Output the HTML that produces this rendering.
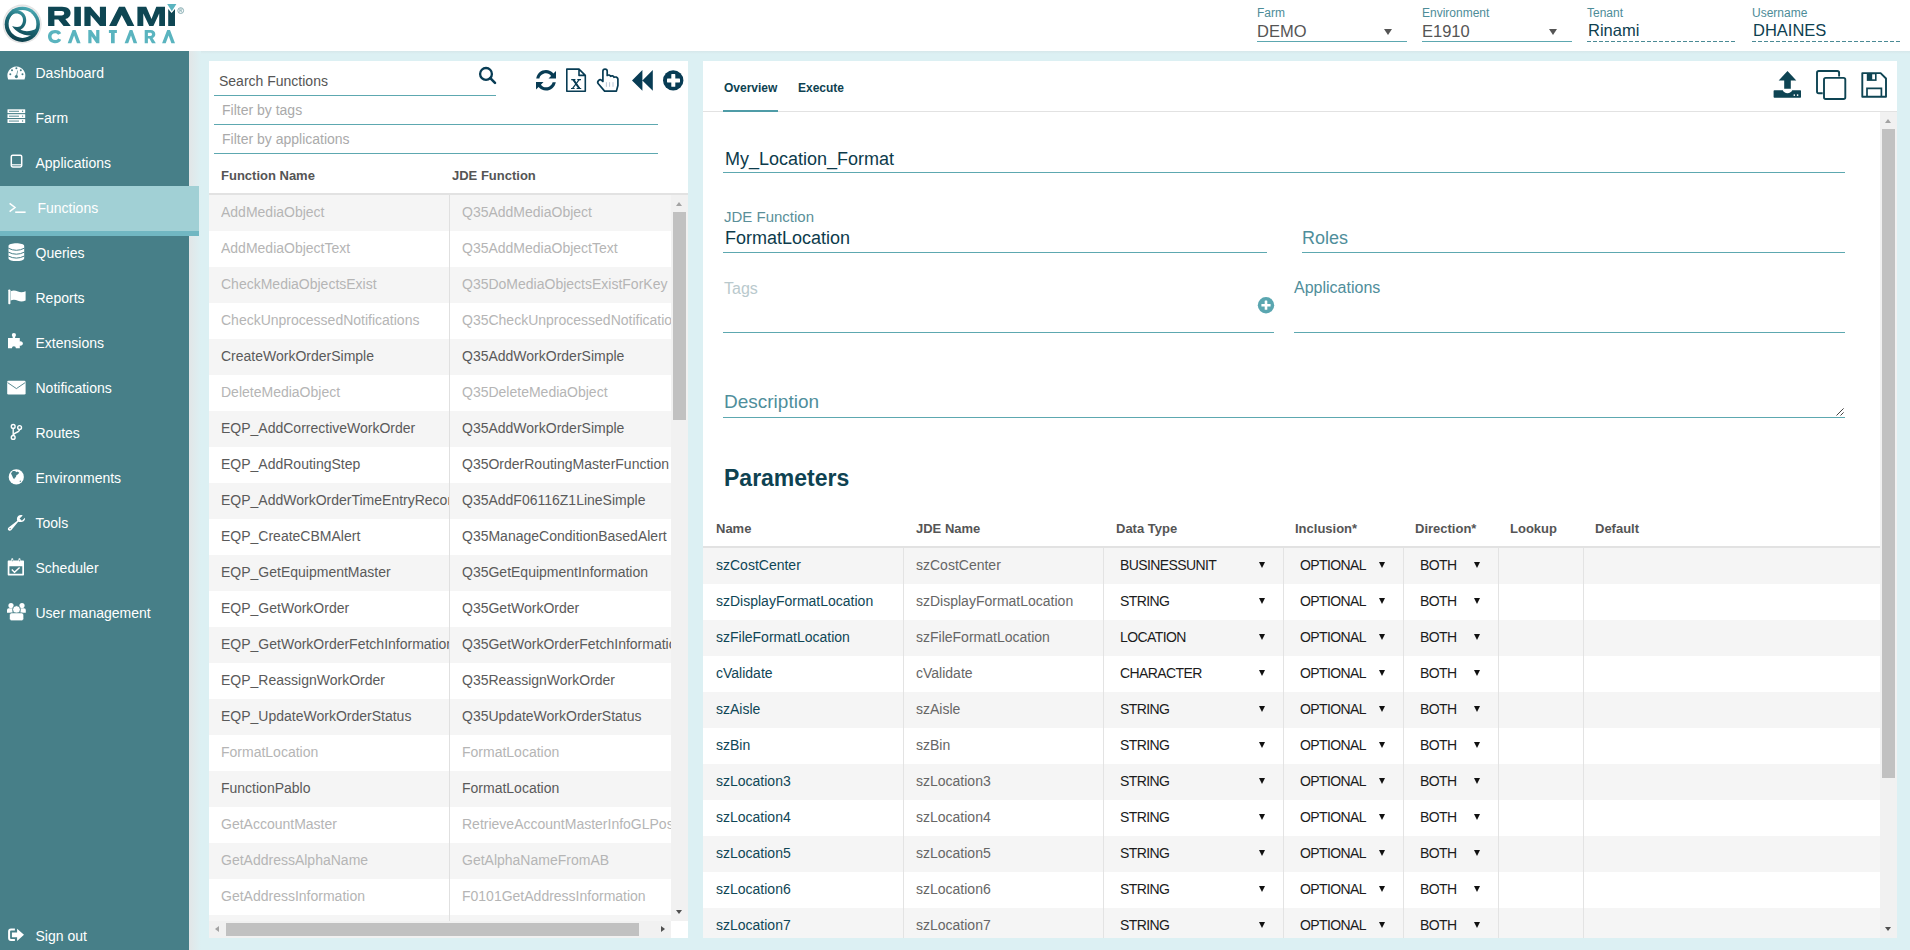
<!DOCTYPE html>
<html><head><meta charset="utf-8"><style>
*{box-sizing:border-box;margin:0;padding:0}
html,body{width:1910px;height:950px;overflow:hidden;background:#dcf0f3;font-family:"Liberation Sans",sans-serif}
.a{position:absolute;white-space:nowrap}
#hdr{position:absolute;left:0;top:0;width:1910px;height:51px;background:#fff}
#side{position:absolute;left:0;top:51px;width:189px;height:899px;background:#477f88}
#sideshadow{position:absolute;left:189px;top:51px;width:12px;height:899px;background:linear-gradient(to right,#e2e6e7,#dcf0f3)}
#topshadow{position:absolute;left:189px;top:51px;width:1721px;height:3px;background:linear-gradient(to bottom,#d6e7ea,#dcf0f3)}
.nav{position:absolute;left:36px;font-size:14px;line-height:16px;color:#fff;white-space:nowrap}
.nic{position:absolute}
#act{position:absolute;left:0;top:186px;width:199px;height:50px;background:#a1d0d5;border-bottom:5px solid #71b7c2}
.card{position:absolute;background:#fff}
.hl{position:absolute;font-size:12px;line-height:14px;color:#4d8c98;white-space:nowrap}
.hv{position:absolute;font-size:16.5px;line-height:18px;color:#555;white-space:nowrap}
.ul{position:absolute;height:1px;background:#5ca7b0}
.row{position:absolute;left:209px;width:462px;height:36px}
.c1{position:absolute;left:12px;top:9px;font-size:14px;line-height:16px;width:228px;overflow:hidden;white-space:nowrap}
.c2{position:absolute;left:253px;top:9px;font-size:14px;line-height:16px;width:209px;overflow:hidden;white-space:nowrap}
.lt{color:#b5b5b5}
.dk{color:#5a5a5a}
.pr{position:absolute;left:703px;width:1177px;height:36px}
.pc{position:absolute;top:9px;font-size:14px;line-height:16px;white-space:nowrap}
.sel{color:#1c1c1c;letter-spacing:-0.6px}
.vl{position:absolute;top:0;width:1px;height:36px;background:#e3e3e3}
.arr{position:absolute;top:14px;width:0;height:0;border-left:3.5px solid transparent;border-right:3.5px solid transparent;border-top:6px solid #111}
.th{position:absolute;font-size:13px;line-height:15px;font-weight:bold;color:#555;white-space:nowrap}
</style></head><body>
<div id="hdr"></div><svg class="a" style="left:0;top:0" width="190" height="50" viewBox="0 0 190 50">
<defs><linearGradient id="lg" gradientUnits="userSpaceOnUse" x1="30" y1="6" x2="17" y2="42"><stop offset="0" stop-color="#52b3bd"/><stop offset="0.45" stop-color="#1f6f7b"/><stop offset="1" stop-color="#0b3b47"/></linearGradient></defs>
<circle cx="22.2" cy="24.1" r="19.5" fill="#e3e3e3"/>
<circle cx="22.2" cy="24.1" r="18.4" fill="#ececec"/>
<circle cx="22.3" cy="24.3" r="17.6" fill="url(#lg)"/>
<circle cx="22.5" cy="24" r="13.9" fill="#fff"/>
<path fill="url(#lg)" d="M19.3 10.7 C23.5 11.8 26.2 15.5 26.2 20 C26.2 24.5 23.8 28.2 20.5 29.8 C25 32 31 31.5 36.4 28.8 L37 34 L29.8 35.6 C22 34.8 15.5 31.5 12.1 25.9 C15 27.2 18.5 27.4 20.3 26.2 C22 25 23 22.5 23 20 C23 16.3 20 13.6 16.3 13.6 C12.8 13.6 10.2 16 9.3 19.5 L7.5 16 L13 9 Z"/>
<g fill="#0e4653">
<path fill-rule="evenodd" d="M48.1 26 V6.8 H62 C67.8 6.8 70.6 9.6 70.6 13 C70.6 16 68.8 18.2 65.3 19 L70.8 26 H63.6 L58.3 19.4 H54.4 V26 Z M54.4 11 V15.4 H61.6 C63.2 15.4 64.2 14.6 64.2 13.2 C64.2 11.8 63.2 11 61.6 11 Z"/>
<rect x="74.3" y="6.8" width="6.6" height="19.2"/>
<path d="M84.4 26 V6.8 H90.4 L99.9 17.8 V6.8 H106 V26 H100 L90.6 15 V26 Z"/>
<path d="M109.1 26 L119 6.8 H124.9 L134.3 26 H127.5 L121.7 15.1 L116.4 26 Z"/>
<path d="M137.4 26 V6.8 H146.2 L151.5 19 L156.3 6.8 H165 V26 H159.2 V13.5 L153.4 26 H149.3 L143.3 13.5 V26 Z"/>
<path d="M168.2 26 V9 L171.6 13 L175 9 V26 Z"/>
</g>
<path fill="#5ab4bf" d="M167.2 3.9 H176.4 L171.8 11.2 Z"/>
<circle cx="180.7" cy="10.6" r="2.9" fill="none" stroke="#7fa7ad" stroke-width="0.9"/>
<path d="M179.8 12.4 V8.9 H181.2 C182.2 8.9 182.2 10.6 181.2 10.6 H179.8 M180.9 10.6 L181.9 12.4" fill="none" stroke="#7fa7ad" stroke-width="0.7"/>
<g fill="#5ab4bf">
<path d="M61.2 33.2 C60 31.2 58.3 30.1 55 30.1 C50.5 30.1 48 33 48 36.6 C48 40.3 50.7 43.2 55 43.2 C58.3 43.2 60.2 41.8 61.2 39.8 L58.1 38.4 C57.5 39.5 56.6 40.1 55.1 40.1 C52.8 40.1 51.5 38.5 51.5 36.6 C51.5 34.7 52.8 33.2 55.1 33.2 C56.6 33.2 57.5 33.9 58.1 34.8 Z"/>
<path d="M67.7 43.2 L72.6 30.1 H75.6 L80.6 43.2 H77 L74.1 35.5 L71.3 43.2 Z"/>
<path d="M88.3 43.2 V30.1 H91.3 L96.2 37 V30.1 H99.4 V43.2 H96.4 L91.5 36.3 V43.2 Z"/>
<path d="M108.9 30.1 H116.9 V33 H114.7 V43.2 H111 V33 H108.9 Z"/>
<path d="M124.6 43.2 L129.7 30.1 H132.4 L137.2 43.2 H133.6 L131 35.4 L128.2 43.2 Z"/>
<path fill-rule="evenodd" d="M144.7 43.2 V30.1 H150.5 C153.6 30.1 155.3 31.8 155.3 34.3 C155.3 36.2 154.3 37.4 152.6 38 L155.8 43.2 H152 L149.4 38.5 H147.9 V43.2 Z M147.9 32.8 V35.9 H150.3 C151.4 35.9 152 35.3 152 34.35 C152 33.4 151.4 32.8 150.3 32.8 Z"/>
<path d="M162.1 43.2 L167.2 30.1 H170 L175 43.2 H171.4 L168.6 35.4 L165.7 43.2 Z"/>
</g>
</svg><div id="side"></div><div id="topshadow"></div><div id="sideshadow"></div><div id="act"></div>
<div class="nav" style="top:65px;left:35.5px">Dashboard</div>
<div class="nav" style="top:110px;left:35.5px">Farm</div>
<div class="nav" style="top:155px;left:35.5px">Applications</div>
<div class="nav" style="top:200px;left:37.5px">Functions</div>
<div class="nav" style="top:245px;left:35.5px">Queries</div>
<div class="nav" style="top:290px;left:35.5px">Reports</div>
<div class="nav" style="top:335px;left:35.5px">Extensions</div>
<div class="nav" style="top:380px;left:35.5px">Notifications</div>
<div class="nav" style="top:425px;left:35.5px">Routes</div>
<div class="nav" style="top:470px;left:35.5px">Environments</div>
<div class="nav" style="top:515px;left:35.5px">Tools</div>
<div class="nav" style="top:560px;left:35.5px">Scheduler</div>
<div class="nav" style="top:605px;left:35.5px">User management</div>
<div class="nav" style="top:928px;left:35.5px">Sign out</div>
<div class="card" style="left:209px;top:61px;width:479px;height:877px"></div>
<div class="card" style="left:703px;top:61px;width:1194px;height:877px"></div>
<div class="hl" style="left:1257px;top:6px">Farm</div>
<div class="hv" style="left:1257px;top:22px;color:#555">DEMO</div>
<div class="ul" style="left:1257px;top:41px;width:150px"></div>
<div class="a" style="left:1384px;top:29px;width:0;height:0;border-left:4px solid transparent;border-right:4px solid transparent;border-top:6px solid #555"></div>
<div class="hl" style="left:1422px;top:6px">Environment</div>
<div class="hv" style="left:1422px;top:22px;color:#555">E1910</div>
<div class="ul" style="left:1422px;top:41px;width:150px"></div>
<div class="a" style="left:1549px;top:29px;width:0;height:0;border-left:4px solid transparent;border-right:4px solid transparent;border-top:6px solid #555"></div>
<div class="hl" style="left:1587px;top:6px">Tenant</div>
<div class="hv" style="left:1588px;top:21px;color:#0d4050">Rinami</div>
<div class="a" style="left:1587px;top:41px;width:150px;height:1px;background:repeating-linear-gradient(to right,#4a8a95 0 4px,transparent 4px 6px)"></div>
<div class="hl" style="left:1752px;top:6px">Username</div>
<div class="hv" style="left:1753px;top:21px;color:#0d4050">DHAINES</div>
<div class="a" style="left:1752px;top:41px;width:150px;height:1px;background:repeating-linear-gradient(to right,#4a8a95 0 4px,transparent 4px 6px)"></div>
<div class="a" style="left:219px;top:73px;font-size:14px;line-height:16px;color:#555">Search Functions</div>
<div class="a" style="left:214px;top:95px;width:282px;height:1px;background:#5da8b0"></div>
<div class="a" style="left:222px;top:102px;font-size:14px;line-height:16px;color:#aaa">Filter by tags</div>
<div class="a" style="left:214px;top:124px;width:444px;height:1px;background:#5da8b0"></div>
<div class="a" style="left:222px;top:131px;font-size:14px;line-height:16px;color:#aaa">Filter by applications</div>
<div class="a" style="left:214px;top:153px;width:444px;height:1px;background:#5da8b0"></div>
<div class="th" style="left:221px;top:168px">Function Name</div>
<div class="th" style="left:452px;top:168px">JDE Function</div>
<div class="a" style="left:209px;top:193px;width:479px;height:2px;background:#e2e2e2"></div>
<div class="row" style="top:195px;height:36px;background:#f5f5f5;overflow:hidden"><div class="c1 lt">AddMediaObject</div><div class="c2 lt">Q35AddMediaObject</div></div>
<div class="row" style="top:231px;height:36px;background:#fff;overflow:hidden"><div class="c1 lt">AddMediaObjectText</div><div class="c2 lt">Q35AddMediaObjectText</div></div>
<div class="row" style="top:267px;height:36px;background:#f5f5f5;overflow:hidden"><div class="c1 lt">CheckMediaObjectsExist</div><div class="c2 lt">Q35DoMediaObjectsExistForKey</div></div>
<div class="row" style="top:303px;height:36px;background:#fff;overflow:hidden"><div class="c1 lt">CheckUnprocessedNotifications</div><div class="c2 lt">Q35CheckUnprocessedNotifications</div></div>
<div class="row" style="top:339px;height:36px;background:#f5f5f5;overflow:hidden"><div class="c1 dk">CreateWorkOrderSimple</div><div class="c2 dk">Q35AddWorkOrderSimple</div></div>
<div class="row" style="top:375px;height:36px;background:#fff;overflow:hidden"><div class="c1 lt">DeleteMediaObject</div><div class="c2 lt">Q35DeleteMediaObject</div></div>
<div class="row" style="top:411px;height:36px;background:#f5f5f5;overflow:hidden"><div class="c1 dk">EQP_AddCorrectiveWorkOrder</div><div class="c2 dk">Q35AddWorkOrderSimple</div></div>
<div class="row" style="top:447px;height:36px;background:#fff;overflow:hidden"><div class="c1 dk">EQP_AddRoutingStep</div><div class="c2 dk">Q35OrderRoutingMasterFunction</div></div>
<div class="row" style="top:483px;height:36px;background:#f5f5f5;overflow:hidden"><div class="c1 dk">EQP_AddWorkOrderTimeEntryRecord</div><div class="c2 dk">Q35AddF06116Z1LineSimple</div></div>
<div class="row" style="top:519px;height:36px;background:#fff;overflow:hidden"><div class="c1 dk">EQP_CreateCBMAlert</div><div class="c2 dk">Q35ManageConditionBasedAlert</div></div>
<div class="row" style="top:555px;height:36px;background:#f5f5f5;overflow:hidden"><div class="c1 dk">EQP_GetEquipmentMaster</div><div class="c2 dk">Q35GetEquipmentInformation</div></div>
<div class="row" style="top:591px;height:36px;background:#fff;overflow:hidden"><div class="c1 dk">EQP_GetWorkOrder</div><div class="c2 dk">Q35GetWorkOrder</div></div>
<div class="row" style="top:627px;height:36px;background:#f5f5f5;overflow:hidden"><div class="c1 dk">EQP_GetWorkOrderFetchInformation</div><div class="c2 dk">Q35GetWorkOrderFetchInformation</div></div>
<div class="row" style="top:663px;height:36px;background:#fff;overflow:hidden"><div class="c1 dk">EQP_ReassignWorkOrder</div><div class="c2 dk">Q35ReassignWorkOrder</div></div>
<div class="row" style="top:699px;height:36px;background:#f5f5f5;overflow:hidden"><div class="c1 dk">EQP_UpdateWorkOrderStatus</div><div class="c2 dk">Q35UpdateWorkOrderStatus</div></div>
<div class="row" style="top:735px;height:36px;background:#fff;overflow:hidden"><div class="c1 lt">FormatLocation</div><div class="c2 lt">FormatLocation</div></div>
<div class="row" style="top:771px;height:36px;background:#f5f5f5;overflow:hidden"><div class="c1 dk">FunctionPablo</div><div class="c2 dk">FormatLocation</div></div>
<div class="row" style="top:807px;height:36px;background:#fff;overflow:hidden"><div class="c1 lt">GetAccountMaster</div><div class="c2 lt">RetrieveAccountMasterInfoGLPost</div></div>
<div class="row" style="top:843px;height:36px;background:#f5f5f5;overflow:hidden"><div class="c1 lt">GetAddressAlphaName</div><div class="c2 lt">GetAlphaNameFromAB</div></div>
<div class="row" style="top:879px;height:36px;background:#fff;overflow:hidden"><div class="c1 lt">GetAddressInformation</div><div class="c2 lt">F0101GetAddressInformation</div></div>
<div class="row" style="top:915px;height:6px;background:#f5f5f5;overflow:hidden"><div class="c1 lt">GetBusinessUnit</div><div class="c2 lt">GetBusinessUnit</div></div>
<div class="a" style="left:449px;top:195px;width:1px;height:726px;background:#e0e0e0"></div>
<div class="a" style="left:671px;top:195px;width:17px;height:726px;background:#f1f1f1"></div>
<div class="a" style="left:673px;top:212px;width:13px;height:208px;background:#c1c1c1"></div>
<div class="a" style="left:676px;top:202px;width:0;height:0;border-left:3.5px solid transparent;border-right:3.5px solid transparent;border-bottom:4px solid #a3a3a3"></div>
<div class="a" style="left:676px;top:910px;width:0;height:0;border-left:3.5px solid transparent;border-right:3.5px solid transparent;border-top:4px solid #505050"></div>
<div class="a" style="left:209px;top:921px;width:462px;height:17px;background:#f1f1f1"></div>
<div class="a" style="left:226px;top:923px;width:413px;height:13px;background:#c1c1c1"></div>
<div class="a" style="left:215px;top:926px;width:0;height:0;border-top:3.5px solid transparent;border-bottom:3.5px solid transparent;border-right:4px solid #a3a3a3"></div>
<div class="a" style="left:661px;top:926px;width:0;height:0;border-top:3.5px solid transparent;border-bottom:3.5px solid transparent;border-left:4px solid #505050"></div>
<div class="a" style="left:671px;top:921px;width:17px;height:17px;background:#fff"></div>
<div class="a" style="left:724px;top:81px;font-size:12px;line-height:14px;font-weight:bold;color:#0e4251">Overview</div>
<div class="a" style="left:798px;top:81px;font-size:12px;line-height:14px;font-weight:bold;color:#0e4251">Execute</div>
<div class="a" style="left:703px;top:111px;width:1194px;height:1px;background:#e2e2e2"></div>
<div class="a" style="left:723px;top:110px;width:55px;height:2px;background:#4f9ca7"></div>
<div class="a" style="left:725px;top:149px;font-size:18px;line-height:20px;color:#0d3b4b">My_Location_Format</div>
<div class="a" style="left:723px;top:172px;width:1122px;height:1px;background:#5da8b0"></div>
<div class="a" style="left:724px;top:208px;font-size:15px;line-height:17px;color:#5a8f99">JDE Function</div>
<div class="a" style="left:725px;top:228px;font-size:18px;line-height:20px;color:#0d3b4b">FormatLocation</div>
<div class="a" style="left:723px;top:252px;width:544px;height:1px;background:#5da8b0"></div>
<div class="a" style="left:1302px;top:228px;font-size:18px;line-height:20px;color:#4f8e9b">Roles</div>
<div class="a" style="left:1302px;top:252px;width:543px;height:1px;background:#5da8b0"></div>
<div class="a" style="left:724px;top:280px;font-size:16px;line-height:18px;color:#b9c9cd">Tags</div>
<div class="a" style="left:723px;top:332px;width:551px;height:1px;background:#5da8b0"></div>
<div class="a" style="left:1294px;top:279px;font-size:16px;line-height:18px;color:#4f8e9b">Applications</div>
<div class="a" style="left:1294px;top:332px;width:551px;height:1px;background:#5da8b0"></div>
<div class="a" style="left:724px;top:391px;font-size:19px;line-height:21px;color:#4f8e9b">Description</div>
<div class="a" style="left:723px;top:417px;width:1122px;height:1px;background:#5da8b0"></div>
<div class="a" style="left:724px;top:466px;font-size:23px;line-height:25px;font-weight:bold;color:#0e4251">Parameters</div>
<div class="th" style="left:716px;top:521px">Name</div>
<div class="th" style="left:916px;top:521px">JDE Name</div>
<div class="th" style="left:1116px;top:521px">Data Type</div>
<div class="th" style="left:1295px;top:521px">Inclusion*</div>
<div class="th" style="left:1415px;top:521px">Direction*</div>
<div class="th" style="left:1510px;top:521px">Lookup</div>
<div class="th" style="left:1595px;top:521px">Default</div>
<div class="a" style="left:703px;top:546px;width:1177px;height:2px;background:#e2e2e2"></div>
<div class="pr" style="top:548px;height:36px;background:#f5f5f5;overflow:hidden"><div class="pc" style="left:13px;color:#0f4656">szCostCenter</div><div class="pc" style="left:213px;color:#666">szCostCenter</div><div class="pc sel" style="left:417px">BUSINESSUNIT</div><div class="arr" style="left:556px"></div><div class="pc sel" style="left:597px">OPTIONAL</div><div class="arr" style="left:676px"></div><div class="pc sel" style="left:717px">BOTH</div><div class="arr" style="left:771px"></div><div class="vl" style="left:200px"></div><div class="vl" style="left:400px"></div><div class="vl" style="left:580px"></div><div class="vl" style="left:700px"></div><div class="vl" style="left:795px"></div><div class="vl" style="left:880px"></div></div>
<div class="pr" style="top:584px;height:36px;background:#fff;overflow:hidden"><div class="pc" style="left:13px;color:#0f4656">szDisplayFormatLocation</div><div class="pc" style="left:213px;color:#666">szDisplayFormatLocation</div><div class="pc sel" style="left:417px">STRING</div><div class="arr" style="left:556px"></div><div class="pc sel" style="left:597px">OPTIONAL</div><div class="arr" style="left:676px"></div><div class="pc sel" style="left:717px">BOTH</div><div class="arr" style="left:771px"></div><div class="vl" style="left:200px"></div><div class="vl" style="left:400px"></div><div class="vl" style="left:580px"></div><div class="vl" style="left:700px"></div><div class="vl" style="left:795px"></div><div class="vl" style="left:880px"></div></div>
<div class="pr" style="top:620px;height:36px;background:#f5f5f5;overflow:hidden"><div class="pc" style="left:13px;color:#0f4656">szFileFormatLocation</div><div class="pc" style="left:213px;color:#666">szFileFormatLocation</div><div class="pc sel" style="left:417px">LOCATION</div><div class="arr" style="left:556px"></div><div class="pc sel" style="left:597px">OPTIONAL</div><div class="arr" style="left:676px"></div><div class="pc sel" style="left:717px">BOTH</div><div class="arr" style="left:771px"></div><div class="vl" style="left:200px"></div><div class="vl" style="left:400px"></div><div class="vl" style="left:580px"></div><div class="vl" style="left:700px"></div><div class="vl" style="left:795px"></div><div class="vl" style="left:880px"></div></div>
<div class="pr" style="top:656px;height:36px;background:#fff;overflow:hidden"><div class="pc" style="left:13px;color:#0f4656">cValidate</div><div class="pc" style="left:213px;color:#666">cValidate</div><div class="pc sel" style="left:417px">CHARACTER</div><div class="arr" style="left:556px"></div><div class="pc sel" style="left:597px">OPTIONAL</div><div class="arr" style="left:676px"></div><div class="pc sel" style="left:717px">BOTH</div><div class="arr" style="left:771px"></div><div class="vl" style="left:200px"></div><div class="vl" style="left:400px"></div><div class="vl" style="left:580px"></div><div class="vl" style="left:700px"></div><div class="vl" style="left:795px"></div><div class="vl" style="left:880px"></div></div>
<div class="pr" style="top:692px;height:36px;background:#f5f5f5;overflow:hidden"><div class="pc" style="left:13px;color:#0f4656">szAisle</div><div class="pc" style="left:213px;color:#666">szAisle</div><div class="pc sel" style="left:417px">STRING</div><div class="arr" style="left:556px"></div><div class="pc sel" style="left:597px">OPTIONAL</div><div class="arr" style="left:676px"></div><div class="pc sel" style="left:717px">BOTH</div><div class="arr" style="left:771px"></div><div class="vl" style="left:200px"></div><div class="vl" style="left:400px"></div><div class="vl" style="left:580px"></div><div class="vl" style="left:700px"></div><div class="vl" style="left:795px"></div><div class="vl" style="left:880px"></div></div>
<div class="pr" style="top:728px;height:36px;background:#fff;overflow:hidden"><div class="pc" style="left:13px;color:#0f4656">szBin</div><div class="pc" style="left:213px;color:#666">szBin</div><div class="pc sel" style="left:417px">STRING</div><div class="arr" style="left:556px"></div><div class="pc sel" style="left:597px">OPTIONAL</div><div class="arr" style="left:676px"></div><div class="pc sel" style="left:717px">BOTH</div><div class="arr" style="left:771px"></div><div class="vl" style="left:200px"></div><div class="vl" style="left:400px"></div><div class="vl" style="left:580px"></div><div class="vl" style="left:700px"></div><div class="vl" style="left:795px"></div><div class="vl" style="left:880px"></div></div>
<div class="pr" style="top:764px;height:36px;background:#f5f5f5;overflow:hidden"><div class="pc" style="left:13px;color:#0f4656">szLocation3</div><div class="pc" style="left:213px;color:#666">szLocation3</div><div class="pc sel" style="left:417px">STRING</div><div class="arr" style="left:556px"></div><div class="pc sel" style="left:597px">OPTIONAL</div><div class="arr" style="left:676px"></div><div class="pc sel" style="left:717px">BOTH</div><div class="arr" style="left:771px"></div><div class="vl" style="left:200px"></div><div class="vl" style="left:400px"></div><div class="vl" style="left:580px"></div><div class="vl" style="left:700px"></div><div class="vl" style="left:795px"></div><div class="vl" style="left:880px"></div></div>
<div class="pr" style="top:800px;height:36px;background:#fff;overflow:hidden"><div class="pc" style="left:13px;color:#0f4656">szLocation4</div><div class="pc" style="left:213px;color:#666">szLocation4</div><div class="pc sel" style="left:417px">STRING</div><div class="arr" style="left:556px"></div><div class="pc sel" style="left:597px">OPTIONAL</div><div class="arr" style="left:676px"></div><div class="pc sel" style="left:717px">BOTH</div><div class="arr" style="left:771px"></div><div class="vl" style="left:200px"></div><div class="vl" style="left:400px"></div><div class="vl" style="left:580px"></div><div class="vl" style="left:700px"></div><div class="vl" style="left:795px"></div><div class="vl" style="left:880px"></div></div>
<div class="pr" style="top:836px;height:36px;background:#f5f5f5;overflow:hidden"><div class="pc" style="left:13px;color:#0f4656">szLocation5</div><div class="pc" style="left:213px;color:#666">szLocation5</div><div class="pc sel" style="left:417px">STRING</div><div class="arr" style="left:556px"></div><div class="pc sel" style="left:597px">OPTIONAL</div><div class="arr" style="left:676px"></div><div class="pc sel" style="left:717px">BOTH</div><div class="arr" style="left:771px"></div><div class="vl" style="left:200px"></div><div class="vl" style="left:400px"></div><div class="vl" style="left:580px"></div><div class="vl" style="left:700px"></div><div class="vl" style="left:795px"></div><div class="vl" style="left:880px"></div></div>
<div class="pr" style="top:872px;height:36px;background:#fff;overflow:hidden"><div class="pc" style="left:13px;color:#0f4656">szLocation6</div><div class="pc" style="left:213px;color:#666">szLocation6</div><div class="pc sel" style="left:417px">STRING</div><div class="arr" style="left:556px"></div><div class="pc sel" style="left:597px">OPTIONAL</div><div class="arr" style="left:676px"></div><div class="pc sel" style="left:717px">BOTH</div><div class="arr" style="left:771px"></div><div class="vl" style="left:200px"></div><div class="vl" style="left:400px"></div><div class="vl" style="left:580px"></div><div class="vl" style="left:700px"></div><div class="vl" style="left:795px"></div><div class="vl" style="left:880px"></div></div>
<div class="pr" style="top:908px;height:30px;background:#f5f5f5;overflow:hidden"><div class="pc" style="left:13px;color:#0f4656">szLocation7</div><div class="pc" style="left:213px;color:#666">szLocation7</div><div class="pc sel" style="left:417px">STRING</div><div class="arr" style="left:556px"></div><div class="pc sel" style="left:597px">OPTIONAL</div><div class="arr" style="left:676px"></div><div class="pc sel" style="left:717px">BOTH</div><div class="arr" style="left:771px"></div><div class="vl" style="left:200px"></div><div class="vl" style="left:400px"></div><div class="vl" style="left:580px"></div><div class="vl" style="left:700px"></div><div class="vl" style="left:795px"></div><div class="vl" style="left:880px"></div></div>
<div class="a" style="left:1880px;top:112px;width:17px;height:826px;background:#f1f1f1"></div>
<div class="a" style="left:1882px;top:129px;width:13px;height:649px;background:#c1c1c1"></div>
<div class="a" style="left:1885px;top:119px;width:0;height:0;border-left:3.5px solid transparent;border-right:3.5px solid transparent;border-bottom:4px solid #a3a3a3"></div>
<div class="a" style="left:1885px;top:927px;width:0;height:0;border-left:3.5px solid transparent;border-right:3.5px solid transparent;border-top:4px solid #505050"></div>
<svg class="a" style="left:1834px;top:406px" width="12" height="12" viewBox="1834 406 12 12"><path d="M1836.5 415.5 L1843.6 408.4 M1840.5 415.5 L1843.6 412.4" stroke="#444" stroke-width="1"/></svg>
<svg class="a" style="left:0;top:0" width="200" height="950" viewBox="0 0 200 950">
<g fill="#fff">
<path d="M8.2 79.4 A9 9 0 1 1 24.5 79.4 Z"/>
<g fill="#477f88"><circle cx="16.4" cy="68.2" r="1"/><circle cx="12" cy="70.2" r="1"/><circle cx="20.8" cy="70.2" r="1"/><circle cx="10.3" cy="74.3" r="1"/><circle cx="22.5" cy="74.3" r="1"/><circle cx="16.4" cy="76.6" r="1.6"/><path d="M16 76.6 L17.3 70.5 L17.9 70.6 L16.9 76.8 Z"/></g>
<rect x="7.5" y="109.3" width="17.7" height="3.8"/><rect x="7.5" y="114.2" width="17.7" height="3.8"/><rect x="7.5" y="119.1" width="17.7" height="3.9"/>
<g fill="#477f88"><rect x="9" y="110.8" width="10" height="0.9"/><rect x="9" y="115.7" width="10" height="0.9"/><rect x="9" y="120.6" width="10" height="0.9"/><circle cx="22.6" cy="111.2" r="0.7"/><circle cx="22.6" cy="116.1" r="0.7"/><circle cx="22.6" cy="121" r="0.7"/></g>
</g>
<g fill="none" stroke="#fff">
<rect x="11.3" y="155.2" width="10.4" height="11.8" rx="1.4" stroke-width="1.5"/>
<path d="M11.3 164.8 H21.7" stroke-width="1.2"/>
<path d="M9.6 203.4 L15 207.5 L9.6 211.6" stroke-width="1.5"/>
<path d="M15.2 212.2 H25.6" stroke-width="1.6"/>
</g>
<g fill="#fff">
<path d="M8.5 245.9 C8.5 242.2 24.2 242.2 24.2 245.9 V258.2 C24.2 262 8.5 262 8.5 258.2 Z"/>
</g>
<g fill="none" stroke="#477f88" stroke-width="1">
<path d="M8.3 248.2 Q16.35 252.4 24.4 248.2"/><path d="M8.3 252.1 Q16.35 256.3 24.4 252.1"/><path d="M8.3 256 Q16.35 260.2 24.4 256"/>
</g>
<g fill="#fff">
<rect x="8.3" y="289.4" width="2.1" height="14.8" rx="0.8"/>
<path d="M10.6 291.3 C13 290 15.5 290.3 18 291.6 C20.5 292.8 23 292.5 25.6 291.3 V300.5 C23 301.8 20.5 302 18 300.8 C15.5 299.5 13 299.3 10.6 300.5 Z"/>
<circle cx="13.9" cy="335" r="2.1"/><rect x="12.7" y="335.5" width="2.4" height="3"/>
<path d="M8 337.9 H19.8 V341.5 A2.2 2.2 0 1 1 19.8 345.5 V348.3 H15.9 A2 2 0 1 0 11.9 348.3 H8 Z"/>
<rect x="7.2" y="380.8" width="18.4" height="13.8" rx="1.3"/>
</g>
<path d="M7.6 382.6 L16.4 388.6 L25.2 382.6" fill="none" stroke="#477f88" stroke-width="0.9"/>
<g fill="none" stroke="#fff" stroke-width="1.4">
<circle cx="13.2" cy="426.4" r="1.9"/><circle cx="19.6" cy="427.5" r="1.9"/><circle cx="13.2" cy="437.4" r="1.9"/>
<path d="M13.2 428.3 V435.5"/><path d="M19.6 429.4 C19.6 433 13.5 432 13.3 435.4"/>
</g>
<circle cx="16.3" cy="476.9" r="7.6" fill="#fff"/>
<path fill="#477f88" d="M12.5 471.2 C13.8 470.8 15.6 471 16.8 472.3 L17.6 471.4 L19.2 472.8 C18.6 474 17.5 474.8 16.5 475 L15.8 477.3 C15 477.5 14.3 478 14.5 479.2 L13.2 478.3 C12.6 476.5 11.7 475 11 473.6 Z M19.3 481 L21.2 480.6 L20.5 482.2 Z"/>
<path fill="#fff" d="M25 517.7 L21.9 520.8 L19.6 518.6 L22.7 515.4 C20 514.1 17 515.8 16.9 518.9 C16.9 519.6 17 520.1 17.3 520.7 L8.6 527.4 C7.6 528.3 7.6 529.6 8.5 530.3 C9.3 531.1 10.6 531 11.4 530 L18.2 521.7 C18.8 522 19.4 522.1 20.1 522.1 C23.3 522 25.4 520.3 25 517.7 Z"/>
<circle cx="10.1" cy="528.6" r="0.6" fill="#477f88"/>
<g fill="#fff">
<path fill-rule="evenodd" d="M8.8 560.4 H23 C23.6 560.4 24 560.8 24 561.4 V574.5 C24 575.1 23.6 575.5 23 575.5 H8.7 C8.1 575.5 7.7 575.1 7.7 574.5 V561.4 C7.7 560.8 8.1 560.4 8.8 560.4 Z M9.4 566.2 V573.8 H22.3 V566.2 Z"/>
<rect x="11.3" y="558.2" width="1.9" height="3.6" rx="0.9"/><rect x="18.5" y="558.2" width="1.9" height="3.6" rx="0.9"/>
</g>
<g fill="#477f88"><rect x="11.9" y="559.7" width="0.7" height="1.6"/><rect x="19.1" y="559.7" width="0.7" height="1.6"/></g>
<path d="M11.8 569.6 L14.5 572.2 L19.6 567.4" fill="none" stroke="#fff" stroke-width="1.4"/>
<g fill="#fff">
<circle cx="11" cy="605.5" r="2.6"/><circle cx="22" cy="605.5" r="2.6"/>
<path d="M7 610 Q7 608.2 8.8 608.2 H12.6 V612.8 H7 Z"/><path d="M20.4 608.2 H24 Q25.8 608.2 25.8 610 V612.8 H20.4 Z"/>
</g>
<circle cx="16.5" cy="609.6" r="3.9" fill="#fff" stroke="#477f88" stroke-width="0.8"/>
<path d="M11.6 612.9 H21.6 Q23.7 612.9 23.7 615 V618.6 Q23.7 620.7 21.6 620.7 H11.6 Q9.5 620.7 9.5 618.6 V615 Q9.5 612.9 11.6 612.9 Z" fill="#fff" stroke="#477f88" stroke-width="0.6"/>
<path d="M14.9 929.6 H11 Q9.1 929.6 9.1 931.5 V938 Q9.1 939.9 11 939.9 H14.9" fill="none" stroke="#fff" stroke-width="2"/>
<path d="M11.9 932.4 H17.1 V928.8 L24 934.85 L17.1 940.9 V937.3 H11.9 Z" fill="#fff"/>
</svg>
<svg class="a" style="left:460px;top:60px" width="240" height="40" viewBox="460 60 240 40">
<circle cx="486" cy="73.9" r="5.9" fill="none" stroke="#083c54" stroke-width="2.3"/>
<path d="M490.3 78.2 L495 82.9" stroke="#083c54" stroke-width="2.6" stroke-linecap="round"/>
<path fill="#083c54" d="M536.2 78.4 C537.2 73.5 541 70 546 70 C549 70 551.7 71.3 553.4 73.5 L556 71 V78.5 H548.5 L551.1 75.9 C549.9 74.3 548.1 73.3 546 73.3 C542.7 73.3 540 75.6 539.4 78.4 Z"/>
<path fill="#083c54" d="M555.8 82.2 C554.8 87.1 551 90.6 546 90.6 C543 90.6 540.3 89.3 538.6 87.1 L536 89.6 V82.1 H543.5 L540.9 84.7 C542.1 86.3 543.9 87.3 546 87.3 C549.3 87.3 552 85 552.6 82.2 Z"/>
<path fill="none" stroke="#083c54" stroke-width="1.6" stroke-linejoin="round" d="M566.8 69.1 H579 L585.3 75.4 V91.3 H566.8 Z M579 69.1 V75.4 H585.3"/>
<path d="M573 79.6 L579.6 88.4 M579.2 79.6 L572.6 88.4" stroke="#083c54" stroke-width="1.2"/><path d="M573.3 79.4 L579.3 88.6" stroke="#083c54" stroke-width="1.9"/><path d="M571.2 79.6 H575.4 M577.3 79.6 H581 M571 88.5 H574.6 M576.6 88.5 H581.2" stroke="#083c54" stroke-width="1.1"/>
<path fill="none" stroke="#083c54" stroke-width="1.7" stroke-linejoin="round" d="M602.9 81.5 V71.2 C602.9 68.4 607.2 68.4 607.2 71.2 V75.5 C608.5 74.6 610.2 75 610.6 76.3 C611.7 75.4 613.6 75.8 614 77.3 C615.3 76.6 617.6 77.1 617.9 79 V85.5 L616.4 91.1 H604.6 L598.3 83.7 C596.5 81.6 599.6 78.5 601.6 80.3 Z"/>
<path d="M606.4 82.2 V86.8 M609.6 82.2 V86.8 M613 82.2 V86.8" stroke="#aab8cc" stroke-width="0.8"/>
<path fill="#083c54" d="M642.4 70 V90.8 L632 80.4 Z M652.8 70 V90.8 L642.4 80.4 Z"/>
<circle cx="673.2" cy="80.4" r="10.2" fill="#083c54"/>
<rect x="667" y="78.6" width="13" height="3.8" rx="0.6" fill="#fff"/><rect x="671.3" y="74.1" width="4" height="12.7" rx="0.6" fill="#fff"/>
</svg>
<svg class="a" style="left:1760px;top:62px" width="140" height="44" viewBox="1760 62 140 44">
<path fill="#0e4453" d="M1787.5 71 L1796.3 80.4 H1790.8 V88.8 H1784.2 V80.4 H1778.7 Z"/>
<path fill="#0e4453" d="M1774.4 90.3 H1782.8 C1783.4 92 1785.3 93.2 1787.5 93.2 C1789.7 93.2 1791.6 92 1792.2 90.3 H1800.4 C1800.8 90.3 1801 90.5 1801 90.9 V97.1 C1801 97.5 1800.8 97.7 1800.4 97.7 H1774.4 C1774 97.7 1773.6 97.5 1773.6 97.1 V90.9 C1773.6 90.5 1774 90.3 1774.4 90.3 Z"/>
<circle cx="1794.3" cy="95.1" r="0.85" fill="#fff"/><circle cx="1797.6" cy="95.1" r="0.85" fill="#fff"/>
<path fill="none" stroke="#0e4453" stroke-width="1.9" d="M1822.7 93.2 H1818.8 Q1817 93.2 1817 91.4 V72.8 Q1817 71 1818.8 71 H1837.3 Q1839.1 71 1839.1 72.8 V76.5"/>
<rect x="1824" y="77.9" width="21.3" height="21.1" rx="1.8" fill="none" stroke="#0e4453" stroke-width="1.9"/>
<path fill="none" stroke="#0e4453" stroke-width="1.9" stroke-linejoin="round" d="M1862.3 73.1 H1880.6 L1886 78.5 V96.8 H1862.3 Z"/>
<path fill="#0e4453" d="M1866.8 73.1 H1876.6 V80.9 H1866.8 Z"/>
<rect x="1872.2" y="74.3" width="2.8" height="5" fill="#fff"/>
<path fill="none" stroke="#0e4453" stroke-width="1.7" d="M1867 96.8 V88.3 H1881.4 V96.8"/>
</svg>
<svg class="a" style="left:1256px;top:295px" width="20" height="20" viewBox="1256 295 20 20">
<circle cx="1266" cy="305.2" r="8.2" fill="#5aa6b0"/>
<rect x="1261.4" y="304" width="9.2" height="2.6" rx="0.4" fill="#fff"/><rect x="1264.7" y="300.6" width="2.6" height="9.2" rx="0.4" fill="#fff"/>
</svg>
</body></html>
